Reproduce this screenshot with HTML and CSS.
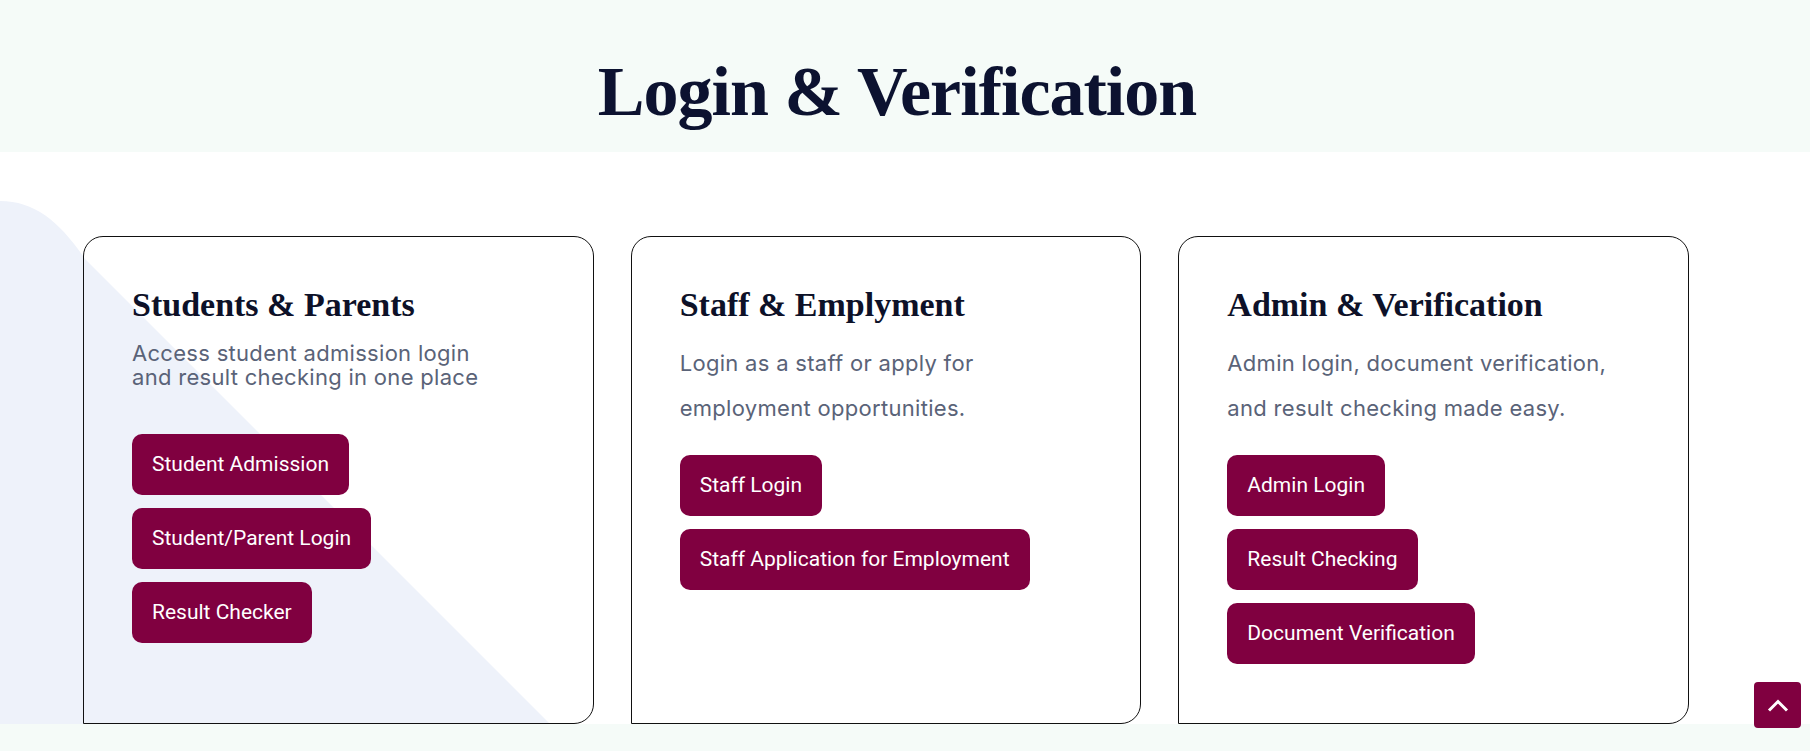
FILE: index.html
```html
<!DOCTYPE html>
<html lang="en">
<head>
<meta charset="utf-8">
<title>Login &amp; Verification</title>
<meta name="viewport" content="width=device-width, initial-scale=1.0">
<link rel="stylesheet" href="styles.css">
</head>
<body>

<div class="heading">
  <h1>Login &amp; Verification</h1>
</div>

<div class="login-section">
  <!-- soft shape behind the first card -->
  <svg class="bg-shape" viewBox="0 0 700 700" width="700" height="700">
    <path d="M0 49 C35 49 60 70 85 107 L700 722 L0 722 Z" fill="#eef2fa"/>
  </svg>

  <div class="cards">
    <div class="card card-tight">
      <h2>Students &amp; Parents</h2>
      <p>Access student admission login<br>and result checking in one place</p>
      <div class="btns">
        <a class="btn" href="#">Student Admission</a>
        <a class="btn" href="#">Student/Parent Login</a>
        <a class="btn" href="#">Result Checker</a>
      </div>
    </div>

    <div class="card">
      <h2>Staff &amp; Emplyment</h2>
      <p>Login as a staff or apply for<br>employment opportunities.</p>
      <div class="btns">
        <a class="btn" href="#">Staff Login</a>
        <a class="btn" href="#">Staff Application for Employment</a>
      </div>
    </div>

    <div class="card">
      <h2>Admin &amp; Verification</h2>
      <p>Admin login, document verification,<br>and result checking made easy.</p>
      <div class="btns">
        <a class="btn" href="#">Admin Login</a>
        <a class="btn" href="#">Result Checking</a>
        <a class="btn" href="#">Document Verification</a>
      </div>
    </div>
  </div>
</div>

<div class="strip"></div>

<a href="#" class="to-top" aria-label="Back to top">
  <svg width="22" height="13" viewBox="0 0 22 13">
    <polyline points="2,11.5 11,2.5 20,11.5" fill="none" stroke="#fff" stroke-width="3"/>
  </svg>
</a>

</body>
</html>
```

FILE: styles.css
```css
* {
  margin: 0;
  padding: 0;
  box-sizing: border-box;
}

body {
  background-color: #fff;
  font-family: "Inter", "Noto Sans", sans-serif;
  overflow: hidden;
}

.heading {
  background-color: #f5fbf8;
  padding: 52px 16px 20px 0;
  text-align: center;
}

.heading h1 {
  font-family: "Liberation Serif", serif;
  font-weight: 700;
  font-size: 70px;
  line-height: 80px;
  letter-spacing: -1px;
  color: #0c1230;
}

.login-section {
  position: relative;
  padding: 84px 121px 0 83px;
  overflow: hidden;
}

.bg-shape {
  position: absolute;
  left: 0;
  top: 0;
}

.cards {
  position: relative;
  display: grid;
  grid-template-columns: repeat(3, 1fr);
  gap: 37px;
}

.card {
  border: 1px solid #111;
  border-radius: 20px 20px 20px 0;
  padding: 48px 48px 59px;
}

.card h2 {
  font-family: "Liberation Serif", serif;
  font-weight: 700;
  font-size: 34px;
  line-height: 40px;
  color: #0d1128;
  margin-bottom: 16px;
}

.card p {
  font-size: 22px;
  line-height: 45px;
  letter-spacing: 0.3px;
  color: #5a6378;
  margin-bottom: 24px;
}

.card-tight p {
  line-height: 24px;
  margin-bottom: 45px;
}

.btns {
  display: flex;
  flex-direction: column;
  align-items: flex-start;
  gap: 13px;
}

.btn {
  display: block;
  background-color: #800040;
  color: #fff;
  font-family: Roboto, sans-serif;
  font-size: 21px;
  line-height: 25px;
  padding: 18px 20px;
  border-radius: 10px;
  text-decoration: none;
}

.strip {
  background-color: #f5fbf8;
  height: 27px;
}

.to-top {
  position: fixed;
  right: 9px;
  bottom: 23px;
  width: 47px;
  height: 46px;
  background-color: #800040;
  border-radius: 4px;
  display: flex;
  align-items: center;
  justify-content: center;
}
```
